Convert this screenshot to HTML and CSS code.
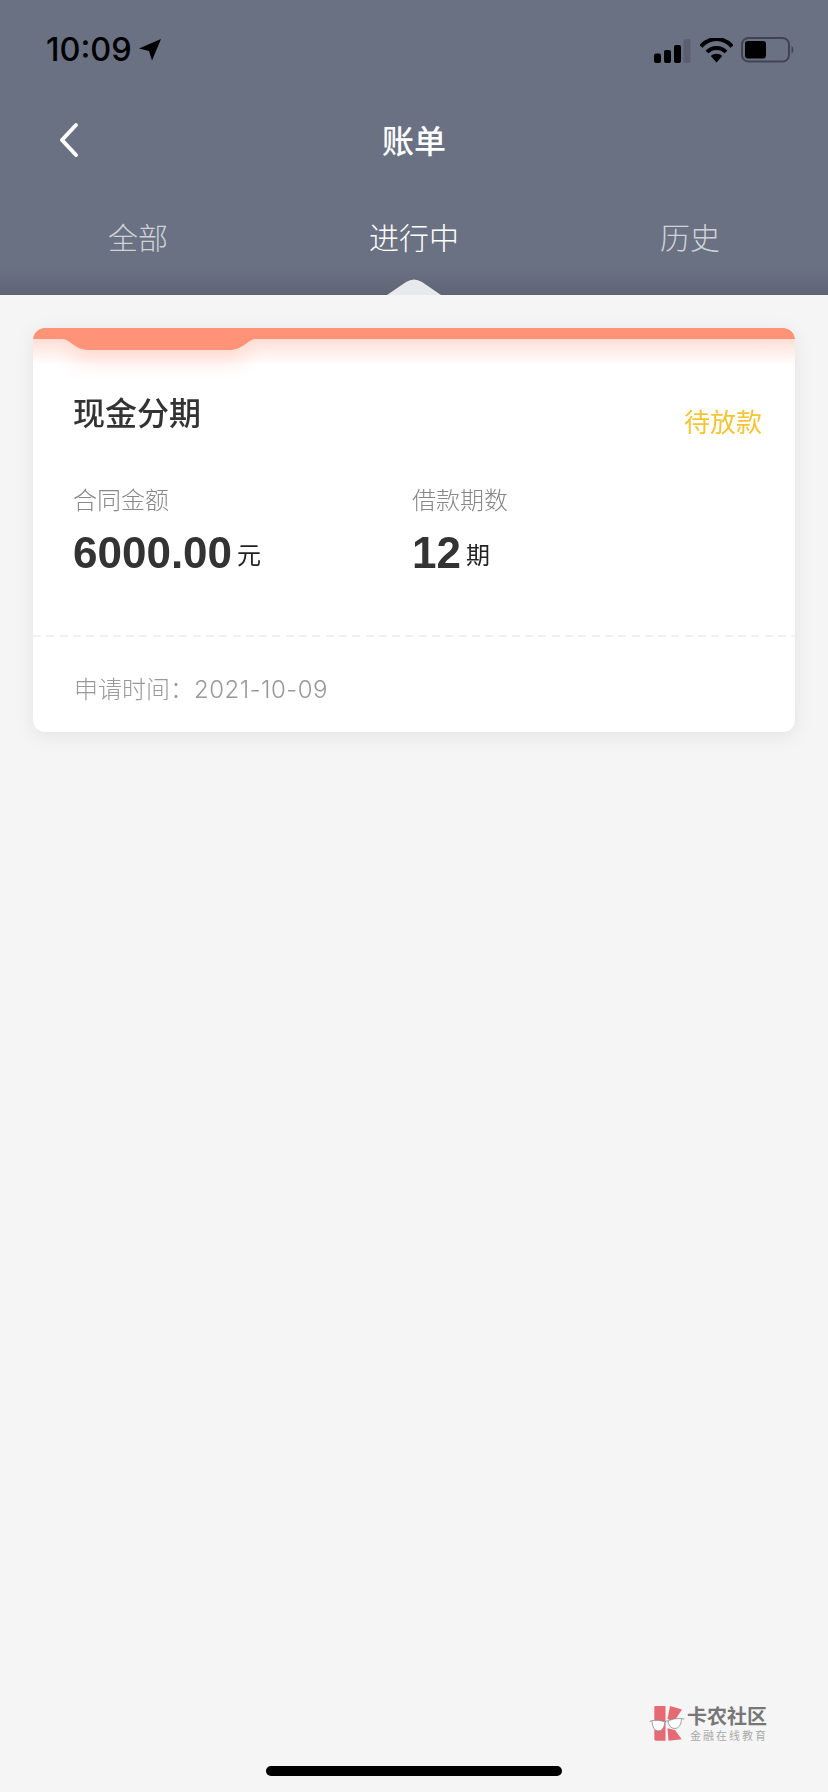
FILE: index.html
```html
<!DOCTYPE html>
<html lang="zh">
<head>
  <meta charset="UTF-8" />
  <meta name="viewport" content="width=device-width, initial-scale=1.0" />
  <title>账单</title>
  <link rel="stylesheet" href="styles.css">
</head>
<body>
  <div class="page">
    <header class="header">
      <div class="status">
        <div class="status-left">
          <span class="time">10:09</span>
          <svg class="arrow" width="22" height="22" viewBox="0 0 22 22"><path d="M22 0 L13 21.500 L10 12 L0 9.500 Z" fill="#000"/></svg>
        </div>
        <div class="status-right">
          <svg width="38" height="25" viewBox="0 0 38 25">
            <rect x="1" y="15.500" width="7" height="9.500" rx="2" fill="#000"/>
            <rect x="11" y="12" width="7" height="13" rx="2" fill="#000"/>
            <rect x="21" y="7" width="7" height="18" rx="2" fill="#000"/>
            <rect x="30.500" y="1" width="7" height="24" rx="2" fill="#5a6071"/>
          </svg>
          <svg class="wifi" width="33" height="25" viewBox="0 0 33 25">
            <path d="M1 8.500 C9.500 -1.500 23.500 -1.500 32 8.500" fill="none" stroke="#000" stroke-width="4"/>
            <path d="M7 14 C12 8.500 21 8.500 26 14" fill="none" stroke="#000" stroke-width="4"/>
            <path d="M10.800 18 C14 15 19 15 22.200 18 L16.500 24.500 Z" fill="#000"/>
          </svg>
          <svg class="battery" width="54" height="26" viewBox="0 0 54 26">
            <rect x="1" y="1" width="47" height="23.500" rx="6.500" fill="none" stroke="#3f4453" stroke-width="2"/>
            <rect x="4" y="4" width="21" height="17.500" rx="3" fill="#000"/>
            <path d="M50.500 9 C53 10 53 15.500 50.500 16.500 Z" fill="#3f4453"/>
          </svg>
        </div>
      </div>
      <div class="nav">
        <svg class="back" width="22" height="36" viewBox="0 0 22 36"><path d="M18 3 L4 18 L18 33" fill="none" stroke="#fff" stroke-width="4" stroke-linecap="round" stroke-linejoin="round"/></svg>
        <h1 class="title">账单</h1>
      </div>
      <div class="tabs">
        <div class="tab">全部</div>
        <div class="tab active">进行中
          <svg class="pointer" width="56" height="16" viewBox="0 0 56 16"><path d="M1 16 L20 3 Q28 -2 36 3 L55 16 Z" fill="#e8e9eb"/></svg>
        </div>
        <div class="tab">历史</div>
      </div>
    </header>

    <main class="main">
      <section class="card">
        <div class="band"></div>
        <div class="glow"></div>
        <div class="notch-glow"></div>
        <svg class="notch" width="192" height="11" viewBox="0 0 192 11"><path d="M0 0 H192 C184 1 180 11 166 11 H26 C12 11 8 1 0 0 Z" fill="#ff9378"/></svg>
        <div class="card-body">
          <div class="card-head">
            <h2 class="card-title">现金分期</h2>
            <span class="state">待放款</span>
          </div>
          <div class="stats">
            <div class="stat">
              <div class="label">合同金额</div>
              <div class="value">6000.00<span class="unit">元</span></div>
            </div>
            <div class="stat">
              <div class="label">借款期数</div>
              <div class="value">12<span class="unit">期</span></div>
            </div>
          </div>
        </div>
        <div class="divider"></div>
        <div class="card-foot">申请时间：<span class="date">2021-10-09</span></div>
      </section>
    </main>

    <div class="brand">
      <svg class="brand-icon" width="36" height="36" viewBox="0 0 36 36">
        <path d="M6.500 1 H16.500 L16.500 35.700 H7 Q5.300 35.700 5.300 34 V2.200 Q5.300 1 6.500 1 Z" fill="#e66a74"/>
        <path d="M21 1 L33 4.500 L25 16.700 L18.500 14 Z" fill="#e66a74"/>
        <path d="M18.500 23.300 L26 25 L32.700 34.300 L19.500 35.700 Z" fill="#e66a74"/>
        <path d="M0.500 16.700 L3 15.500 Q10 14.500 16 16.800 Q15 26 9 26 Q3.500 25.500 3 16" fill="#fff" stroke="#8a8a8a" stroke-width=".8"/>
        <path d="M35.300 14 L32.500 13.500 Q25 13 19 15.800 Q20 23.500 26 23.500 Q32 23 32.500 14" fill="#fff" stroke="#8a8a8a" stroke-width=".8"/>
        <path d="M16 16.800 Q17.500 16 19 15.800" fill="none" stroke="#8a8a8a" stroke-width=".8"/>
      </svg>
      <div class="brand-text">
        <div class="brand-name">卡农社区</div>
        <div class="brand-sub">金融在线教育</div>
      </div>
    </div>
    <div class="home-wrap"><div class="home"></div></div>
  </div>
</body>
</html>
```

FILE: styles.css
```css
* { box-sizing: border-box; }
html, body { margin: 0; padding: 0; }
body { font-family: "Noto Sans CJK SC", "Liberation Sans", sans-serif; background: #f5f5f5; color: #333; }
.page { width: 828px; height: 1792px; display: flex; flex-direction: column; overflow: hidden; }

/* header */
.header { height: 295px; background: linear-gradient(#6a7183 0, #6a7183 268px, #5f6474 295px); flex: none; }
.status { height: 100px; display: flex; justify-content: space-between; align-items: center; padding: 0 33px 0 46px; }
.status-left { display: flex; align-items: center; gap: 7px; }
.time { font-family: Inter, "Liberation Sans", sans-serif; font-size: 32.500px; font-weight: 500; color: #000; line-height: 40px; }
.status-right { display: flex; align-items: center; }
.wifi { margin-left: 9px; }
.battery { margin-left: 8px; }
.nav { height: 80px; padding-bottom: 2px; display: flex; align-items: center; justify-content: center; position: relative; }
.back { position: absolute; left: 58px; top: 22px; }
.title { margin: 0; font-size: 32px; font-weight: 500; color: #fff; line-height: 44px; }
.tabs { display: grid; grid-template-columns: repeat(3, 1fr); margin-top: 20px; height: 95px; }
.tab { position: relative; text-align: center; font-size: 30px; font-weight: 300; line-height: 72px; color: #cfd2d7; }
.tab.active { color: #fff; }
.pointer { position: absolute; left: 110px; bottom: 0; }

/* card */
.main { flex: 1; padding: 33px 33px 0; filter: drop-shadow(0 4px 9px rgba(0,0,0,.07)); }
.card { position: relative; height: 404px; background: #fff; border-radius: 12px; overflow: hidden; }
.band { height: 11px; background: #ff9378; }
.glow { height: 26px; background: linear-gradient(rgba(255,147,120,.3), rgba(255,147,120,0)); }
.notch-glow { position: absolute; left: 40px; top: 18px; width: 172px; height: 14px; background: rgba(255,147,120,.3); filter: blur(10px); }
.notch { position: absolute; left: 30px; top: 11px; }
.card-body { position: relative; margin-top: -26px; padding: 52px 33px 0 40px; height: 296px; }
.card-head { display: flex; justify-content: space-between; align-items: flex-start; }
.card-title { margin: 0; font-size: 32px; font-weight: 500; line-height: 40px; color: #333; }
.state { margin-top: 10px; font-size: 26px; font-weight: 400; line-height: 40px; color: #f3c433; }
.stats { display: grid; grid-template-columns: 339px 1fr; margin-top: 41px; }
.label { font-size: 24px; font-weight: 300; line-height: 34px; color: #888; }
.value { margin-top: 12px; font-family: "Liberation Sans", sans-serif; font-size: 44px; font-weight: 700; line-height: 50px; color: #333; }
.unit { margin-left: 5px; font-family: "Noto Sans CJK SC", sans-serif; font-size: 24px; font-weight: 400; color: #222; vertical-align: 4px; }
.divider { height: 2px; background: repeating-linear-gradient(90deg, #f0f0f0 0, #f0f0f0 8px, transparent 8px, transparent 13.300px); }
.card-foot { padding: 34px 0 0 41px; font-size: 24px; font-weight: 300; line-height: 34px; color: #999; }
.date { font-family: Inter, sans-serif; font-weight: 300; letter-spacing: .5px; }

/* watermark + home bar */
.brand { display: flex; justify-content: flex-end; align-items: flex-start; gap: 2px; padding-right: 60px; height: 61px; flex: none; }
.brand-icon { flex: none; }
.brand-name { font-size: 20px; font-weight: 700; line-height: 22px; color: #777; }
.brand-sub { margin-top: 1px; font-size: 11px; line-height: 14px; letter-spacing: 2px; color: #aaa; padding-left: 3px; }
.home-wrap { height: 26px; flex: none; display: flex; justify-content: center; }
.home { width: 296px; height: 10px; border-radius: 5px; background: #000; }
```
